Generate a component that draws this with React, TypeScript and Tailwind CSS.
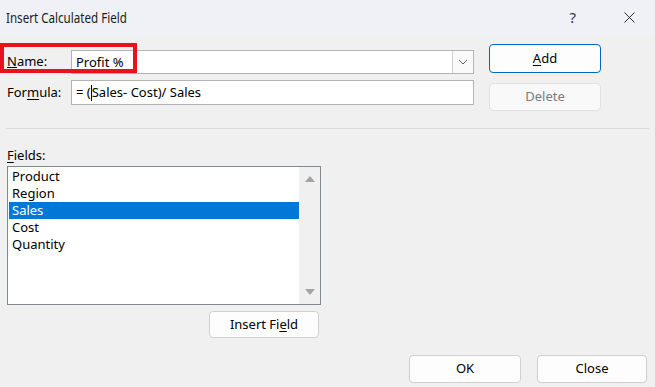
import { X } from "lucide-react";

const fields = ["Product", "Region", "Sales", "Cost", "Quantity"];

const btn = "flex items-center justify-center rounded-[4px] border text-[13px]";

export default function App() {
  return (
    <div className="relative flex h-[387px] w-[655px] flex-col overflow-hidden bg-[#f0f0f0] font-['Noto_Sans',sans-serif] text-[13px] text-black">
      {/* title bar */}
      <div className="flex h-[35px] items-center bg-[#eff1f7] pl-[6px] pr-[16px]">
        <span className="origin-left scale-x-[0.8] text-[14.5px] text-[#1b1b1b]">Insert Calculated Field</span>
        <span className="ml-auto mr-[44px] text-[15px] text-[#333]">?</span>
        <X size={19} strokeWidth={1.2} className="text-[#222]" />
      </div>

      {/* name / formula */}
      <div className="flex pl-[7px] pt-[9px]">
        <div className="flex w-[467px] flex-col">
          <div className="mt-[6px] flex h-[24px] items-center">
            <span className="w-[64px]">
              <span className="underline underline-offset-[1px]">N</span>ame:
            </span>
            <div className="flex h-full flex-1 items-center border border-[#b4b4b4] bg-white">
              <span className="pl-[4px] pt-[1px]">Profit %</span>
              <div className="ml-auto flex h-full w-[21px] items-center justify-center border-l border-[#d0d0d0] bg-[#fafafa]">
                <svg width="10" height="6" viewBox="0 0 10 6">
                  <path d="M1 1 L5 5 L9 1" fill="none" stroke="#606060" strokeWidth="1" />
                </svg>
              </div>
            </div>
          </div>
          <div className="mt-[6px] flex h-[25px] items-center">
            <span className="w-[64px]">
              For<span className="underline underline-offset-2">m</span>ula:
            </span>
            <div className="flex h-full flex-1 items-center border border-[#b4b4b4] bg-white pl-[4px]">
              <span>= (</span>
              <span className="h-[16px] w-px bg-black" />
              <span>Sales- Cost)/ Sales</span>
            </div>
          </div>
        </div>
        <div className="ml-[15px] flex flex-col">
          <button className={`${btn} h-[29px] w-[112px] border-[#0067c0] bg-[#fdfdfd] text-black`}>
            <span className="underline underline-offset-2">A</span>dd
          </button>
          <button className={`${btn} mt-[10px] h-[28px] w-[112px] border-[#e2e2e2] bg-[#f9f9f9] text-[#7a7a7a]`}>
            Delete
          </button>
        </div>
      </div>

      {/* separator */}
      <div className="mx-[6px] mt-[17px] h-px bg-[#dadada]" />

      {/* fields */}
      <div className="mt-[18px] pl-[7px] leading-[16px]">
        <span className="underline underline-offset-2">F</span>ields:
      </div>
      <div className="ml-[7px] mt-[3px] flex h-[139px] w-[314px] border border-[#828790] bg-white">
        <div className="flex flex-1 flex-col pl-px pt-px">
          {fields.map((f) => (
            <div
              key={f}
              className={`flex h-[17px] items-center pl-[3px] pt-[1px] ${f === "Sales" ? "bg-[#0078d7] text-white" : ""}`}
            >
              {f}
            </div>
          ))}
        </div>
        <div className="flex w-[21px] flex-col items-center justify-between bg-[#f0f0f0] py-[9px]">
          <svg width="10" height="6" viewBox="0 0 10 6">
            <path d="M0 6 L5 0 L10 6 Z" fill="#a3a3a3" />
          </svg>
          <svg width="10" height="6" viewBox="0 0 10 6">
            <path d="M0 0 L5 6 L10 0 Z" fill="#a3a3a3" />
          </svg>
        </div>
      </div>

      <div className="ml-[209px] mt-[6px]">
        <button className={`${btn} h-[27px] w-[110px] border-[#d0d0d0] bg-[#fdfdfd] text-black`}>
          Insert Fi<span className="underline underline-offset-2">e</span>ld
        </button>
      </div>

      <div className="mt-[17px] flex justify-end gap-[16px] pr-[8px]">
        <button className={`${btn} h-[28px] w-[112px] border-[#d0d0d0] bg-[#fdfdfd] text-black`}>OK</button>
        <button className={`${btn} h-[28px] w-[110px] border-[#d0d0d0] bg-[#fdfdfd] text-black`}>Close</button>
      </div>

      {/* red highlight around Name */}
      <div className="absolute left-0 top-[43px] h-[30px] w-[137px] border-[4px] border-[#e8111d]" />
    </div>
  );
}
